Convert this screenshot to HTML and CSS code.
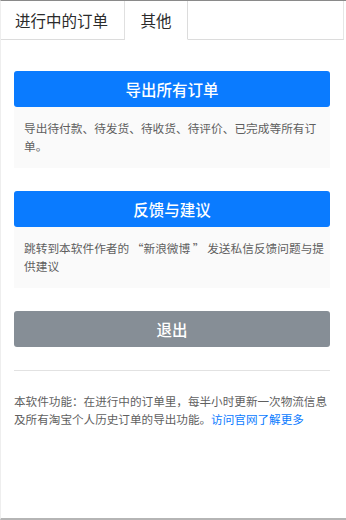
FILE: index.html
```html
<!DOCTYPE html>
<html lang="zh-CN">
<head>
<meta charset="utf-8">
<title>其他</title>
<link rel="stylesheet" href="styles.css">
</head>
<body>
<div class="page">
  <div class="tabs">
    <div class="tab">进行中的订单</div>
    <div class="tab active">其他</div>
    <div class="tab-filler"></div>
  </div>
  <div class="content">
    <div class="btn btn-primary">导出所有订单</div>
    <div class="desc">导出待付款、待发货、待收货、待评价、已完成等所有订单。</div>
    <div class="btn btn-primary">反馈与建议</div>
    <div class="desc">跳转到本软件作者的 “新浪微博 ” 发送私信反馈问题与提供建议</div>
    <div class="btn btn-secondary">退出</div>
    <hr class="sep">
    <div class="footer"><span>本软件功能：在进行中的订单里，每半小时更新一次物流信息及所有淘宝个人历史订单的导出功能。</span><a class="link" href="#">访问官网了解更多</a></div>
  </div>
</div>
</body>
</html>
```
FILE: styles.css
```css
html, body {
  margin: 0;
  padding: 0;
  background: #ffffff;
}
body {
  font-family: "Noto Sans CJK SC", "Noto Sans", sans-serif;
  color: #333;
}
.page {
  width: 346px;
  height: 520px;
  box-sizing: border-box;
  border-top: 1px solid #8a8a8a;
  border-left: 1px solid #eeeeee;
  border-bottom: 2px solid #b5b5b5;
  overflow: hidden;
}
.tabs {
  display: flex;
  height: 39px;
}
.tab {
  box-sizing: border-box;
  height: 39px;
  display: flex;
  align-items: center;
  font-size: 15.5px;
  color: #2b2b2b;
  border-bottom: 1px solid #dcdcdc;
  border-right: 1px solid #e0e0e0;
}
.tab:first-child {
  width: 124px;
  padding-left: 14px;
}
.tab.active {
  width: 63px;
  justify-content: center;
  border-bottom-color: transparent;
  border-right: 1px solid #dcdcdc;
}
.tab-filler {
  flex: 1;
  box-sizing: border-box;
  height: 39px;
  margin-right: 2px;
  border-bottom: 1px solid #dcdcdc;
  border-right: 1px solid #e6e6e6;
}
.content {
  padding: 31px 16px 0 13px;
}
.btn {
  height: 36px;
  border-radius: 3px;
  display: flex;
  align-items: center;
  justify-content: center;
  color: #fff;
  font-size: 15.5px;
  font-weight: 500;
}
.btn-primary {
  background: #0a7bff;
}
.btn-secondary {
  background: #868e96;
  margin-top: 23px;
}
.desc {
  background: #fafafa;
  font-size: 11.7px;
  line-height: 18px;
  color: #5f5f5f;
  padding: 12px 3px 13px 10px;
  margin-bottom: 23px;
}
.sep {
  margin: 23px 0 0 0;
  border: none;
  border-top: 1px solid #e2e2e2;
  height: 0;
}
.footer {
  margin: 22px 0 0 0;
  font-size: 11.6px;
  line-height: 17.5px;
  color: #5f5f5f;
}
.link {
  color: #0a7bff;
  text-decoration: none;
}
```
